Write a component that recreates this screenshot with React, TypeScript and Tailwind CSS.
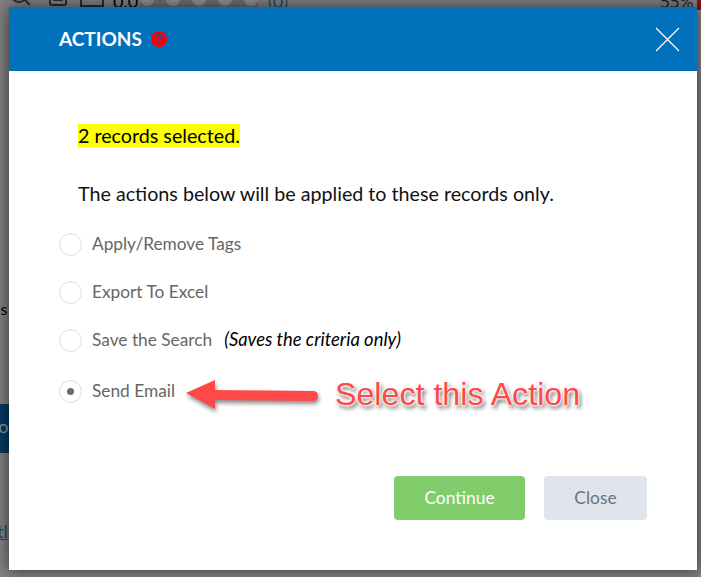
import { FileText, Search } from "lucide-react";

const options = [
  { label: "Apply/Remove Tags", h: "h-[48px]" },
  { label: "Export To Excel", h: "h-[48px]" },
  { label: "Save the Search", note: "(Saves the criteria only)", h: "h-[48px]" },
  { label: "Send Email", checked: true, h: "h-[54px]" },
];

const Radio = ({ checked }: { checked?: boolean }) => (
  <span className="flex items-center justify-center w-[23px] h-[23px] rounded-full border border-[#dcdcdc] bg-white shrink-0">
    {checked && <span className="w-[7px] h-[7px] rounded-full bg-[#6b6b6b]" />}
  </span>
);

const App = () => {
  return (
    <div className="relative w-[701px] h-[577px] overflow-hidden bg-[#808080] font-['Lato','Noto_Sans',sans-serif]">
      {/* page behind the overlay */}
      <div className="flex items-end h-[7px] overflow-hidden pl-[8px] text-[#2b2b2b]">
        <Search size={24} className="shrink-0" />
        <FileText size={24} className="shrink-0 ml-[14px]" />
        <span className="ml-[10px] w-[24px] h-[12px] shrink-0 border-2 border-[#2b2b2b]" />
        <span className="ml-[9px] -mb-[3px] w-[24px] text-[18px] leading-[18px] text-black">0.0</span>
        <div className="flex gap-[12px] ml-[3px] h-[7px] bg-[#6e6e6e]">
          {[0, 1, 2, 3, 4].map((i) => (
            <span key={i} className="w-[14px] h-[14px] -mt-[8px] rounded-full bg-[#8f8f8f] shrink-0" />
          ))}
        </div>
        <span className="ml-[10px] -mb-[3px] w-[20px] text-[18px] leading-[18px] text-[#1f4a5c]">(0)</span>
        <span className="ml-[372px] -mb-[3px] text-[17px] leading-[17px] text-[#222]">55%</span>
      </div>
      <div className="absolute right-0 top-0 w-[4px] h-[10px] bg-[#8a1010]" />
      <div className="absolute left-0 top-[404px] w-[9px] h-[49px] overflow-hidden bg-[#063a5e]">
        <span className="block ml-[-8px] mt-[10px] text-[18px] leading-[24px] text-[#7f98a8]">ro</span>
      </div>
      <span className="absolute left-[-8px] top-[299px] text-[16px] leading-[20px] text-black">es</span>
      <span className="absolute left-[-3px] top-[519px] text-[18px] leading-[24px] text-[#1f4a5c] underline">tl</span>

      {/* dialog */}
      <div className="absolute left-[9px] top-[7px] w-[688px] h-[563px] bg-white shadow-[0_0_14px_rgba(0,0,0,0.6)]">
        <div className="flex items-center justify-between h-[64px] bg-[#0271bb] pl-[50px] pr-[17px]">
          <div className="flex items-center gap-[9px]">
            <h2 className="text-[19px] font-bold text-white">ACTIONS</h2>
            <svg width="16" height="16" viewBox="0 0 16 16">
              <circle cx="8" cy="8" r="8" fill="#ff0000" />
              <path
                d="M5.3 6.1C5.4 4.6 6.5 3.6 8.1 3.6c1.6 0 2.7 1 2.7 2.3 0 1-.5 1.5-1.3 2-.6.4-.8.7-.8 1.3"
                fill="none"
                stroke="#0b5a9c"
                strokeWidth="1.9"
              />
              <rect x="6.9" y="10.5" width="2" height="2" fill="#0b5a9c" />
            </svg>
          </div>
          <svg width="25" height="25" viewBox="0 0 25 25">
            <path d="M1 1L24 24M24 1L1 24" stroke="white" strokeWidth="1.2" fill="none" />
          </svg>
        </div>

        <div className="pl-[69px] pt-[53px]">
          <p className="text-[19.7px] leading-[24px] text-black">
            <span className="bg-[#ffff00]">2 records selected.</span>
          </p>
          <p className="mt-[34px] text-[19.7px] leading-[24px] text-[#111]">
            The actions below will be applied to these records only.
          </p>
        </div>

        <div className="flex flex-col items-start pl-[50px] mt-[14px]">
          {options.map((o) => (
            <div key={o.label} className={`flex items-center ${o.h}`}>
              <Radio checked={o.checked} />
              <span className="ml-[10px] text-[17.3px] text-[#666]">{o.label}</span>
              {o.note && <em className="ml-[12px] text-[18.4px] text-black">{o.note}</em>}
            </div>
          ))}
        </div>

        <div className="absolute right-[50px] bottom-[50px] flex gap-[19px]">
          <button className="w-[131px] h-[44px] rounded bg-[#81cd6b] text-[17.4px] text-white">
            Continue
          </button>
          <button className="w-[103px] h-[44px] rounded bg-[#e0e4ec] text-[17.4px] text-[#6c757d]">
            Close
          </button>
        </div>

        {/* annotation */}
        <svg
          className="absolute left-[177px] top-[368px] drop-shadow-[1px_3px_2px_rgba(0,0,0,0.45)]"
          width="135"
          height="40"
          viewBox="0 0 135 40"
        >
          <path d="M0 18L29 5V15L127 16Q132 16 132 21Q132 26 127 26L29 25V34Z" fill="#ff4848" />
        </svg>
        <span className="absolute left-[326px] top-[368px] text-[32.2px] leading-[38px] font-['Liberation_Sans',sans-serif] text-[#ff4848] [text-shadow:0_0_1px_#fff,0_0_3px_#fff,0_0_3px_#fff,0_0_3px_#fff,2px_3px_4px_rgba(0,0,0,0.75)]">
          Select this Action
        </span>
      </div>
    </div>
  );
};

export default App;
